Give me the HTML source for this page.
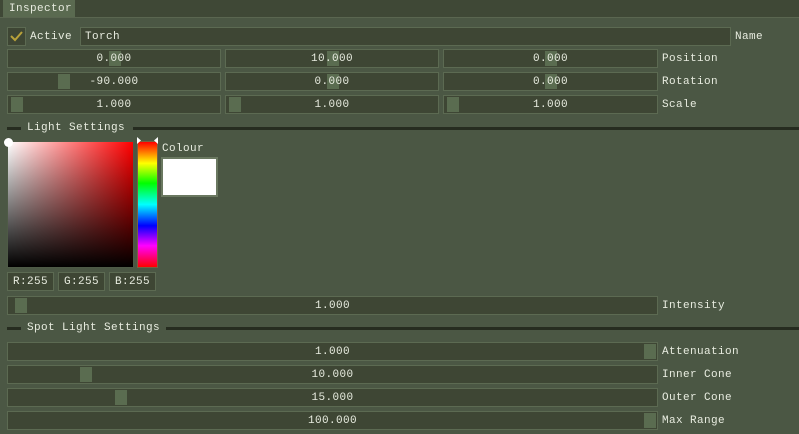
<!DOCTYPE html><html><head><style>
body{margin:0;width:799px;height:434px;background:#4b5744;font:11px "Liberation Mono",monospace;letter-spacing:0.4px;color:#e8ece0;position:relative;overflow:hidden}
.a{position:absolute}
.f{position:absolute;background:#3e4634;border:1px solid #5c6a52;box-sizing:border-box;height:19px;text-align:center;line-height:19px}
.g{position:absolute;top:1px;width:12px;height:15px;background:#5a6c50}
.t{position:absolute;z-index:1;left:0;right:0;top:0}
.l{position:absolute;line-height:21px}
.h{position:absolute;height:3px;background:#262c20}
</style></head><body>
<div class="a" style="left:0;top:0;width:799px;height:17px;background:#3f4836"></div>
<div class="a" style="left:0;top:17px;width:799px;height:1px;background:#5a6650"></div>
<div class="a" style="left:3px;top:0;width:72px;height:17px;background:#5a6a50;line-height:19px;padding-left:6px;box-sizing:border-box">Inspector</div>

<div class="f" style="left:7px;top:27px;width:19px;height:19px"><svg width="17" height="17" style="position:absolute;left:0;top:0"><path d="M3 8l4 4l7-8" stroke="#b8a23a" stroke-width="2" fill="none"/></svg></div>
<div class="l" style="left:30px;top:27px">Active</div>
<div class="f" style="left:80px;top:27px;width:651px;text-align:left;padding-left:4px">Torch</div>
<div class="l" style="left:735px;top:27px">Name</div>

<div class="f" style="left:7px;top:49px;width:214px"><div class="g" style="left:101px"></div><span class="t">0.000</span></div>
<div class="f" style="left:225px;top:49px;width:214px"><div class="g" style="left:101px"></div><span class="t">10.000</span></div>
<div class="f" style="left:443px;top:49px;width:215px"><div class="g" style="left:101px"></div><span class="t">0.000</span></div>
<div class="l" style="left:662px;top:49px">Position</div>

<div class="f" style="left:7px;top:72px;width:214px"><div class="g" style="left:50px"></div><span class="t">-90.000</span></div>
<div class="f" style="left:225px;top:72px;width:214px"><div class="g" style="left:101px"></div><span class="t">0.000</span></div>
<div class="f" style="left:443px;top:72px;width:215px"><div class="g" style="left:101px"></div><span class="t">0.000</span></div>
<div class="l" style="left:662px;top:72px">Rotation</div>

<div class="f" style="left:7px;top:95px;width:214px"><div class="g" style="left:3px"></div><span class="t">1.000</span></div>
<div class="f" style="left:225px;top:95px;width:214px"><div class="g" style="left:3px"></div><span class="t">1.000</span></div>
<div class="f" style="left:443px;top:95px;width:215px"><div class="g" style="left:3px"></div><span class="t">1.000</span></div>
<div class="l" style="left:662px;top:95px">Scale</div>

<div class="h" style="left:7px;top:127px;width:14px"></div>
<div class="l" style="left:27px;top:118px">Light Settings</div>
<div class="h" style="left:133px;top:127px;width:666px"></div>

<div class="a" style="left:7px;top:141px;width:127px;height:127px;background:#4e5a46"></div>
<div class="a" style="left:8px;top:142px;width:125px;height:125px;background:linear-gradient(to bottom,transparent,#000),linear-gradient(to right,#fff,#f00)"></div>
<div class="a" style="left:4px;top:138px;width:9px;height:9px;border-radius:50%;background:#fff"></div>
<div class="a" style="left:138px;top:142px;width:19px;height:125px;background:linear-gradient(#f00,#ff0 17%,#0f0 33%,#0ff 50%,#00f 67%,#f0f 83%,#f00);outline:1px solid #7a6040"></div>
<svg class="a" style="left:136px;top:137px" width="24" height="8"><path d="M1 0v7l4-3.5z" fill="#fff"/><path d="M22 0v7l-4-3.5z" fill="#fff"/></svg>
<div class="l" style="left:162px;top:139px">Colour</div>
<div class="a" style="left:161px;top:157px;width:57px;height:40px;background:#fff;border:2px solid #6a7860;box-sizing:border-box"></div>

<div class="f" style="left:7px;top:272px;width:47px">R:255</div>
<div class="f" style="left:58px;top:272px;width:47px">G:255</div>
<div class="f" style="left:109px;top:272px;width:47px">B:255</div>

<div class="f" style="left:7px;top:296px;width:651px"><div class="g" style="left:7px"></div><span class="t">1.000</span></div>
<div class="l" style="left:662px;top:296px">Intensity</div>

<div class="h" style="left:7px;top:327px;width:14px"></div>
<div class="l" style="left:27px;top:318px">Spot Light Settings</div>
<div class="h" style="left:166px;top:327px;width:633px"></div>

<div class="f" style="left:7px;top:342px;width:651px"><div class="g" style="left:636px"></div><span class="t">1.000</span></div>
<div class="l" style="left:662px;top:342px">Attenuation</div>
<div class="f" style="left:7px;top:365px;width:651px"><div class="g" style="left:72px"></div><span class="t">10.000</span></div>
<div class="l" style="left:662px;top:365px">Inner Cone</div>
<div class="f" style="left:7px;top:388px;width:651px"><div class="g" style="left:107px"></div><span class="t">15.000</span></div>
<div class="l" style="left:662px;top:388px">Outer Cone</div>
<div class="f" style="left:7px;top:411px;width:651px"><div class="g" style="left:636px"></div><span class="t">100.000</span></div>
<div class="l" style="left:662px;top:411px">Max Range</div>
</body></html>
